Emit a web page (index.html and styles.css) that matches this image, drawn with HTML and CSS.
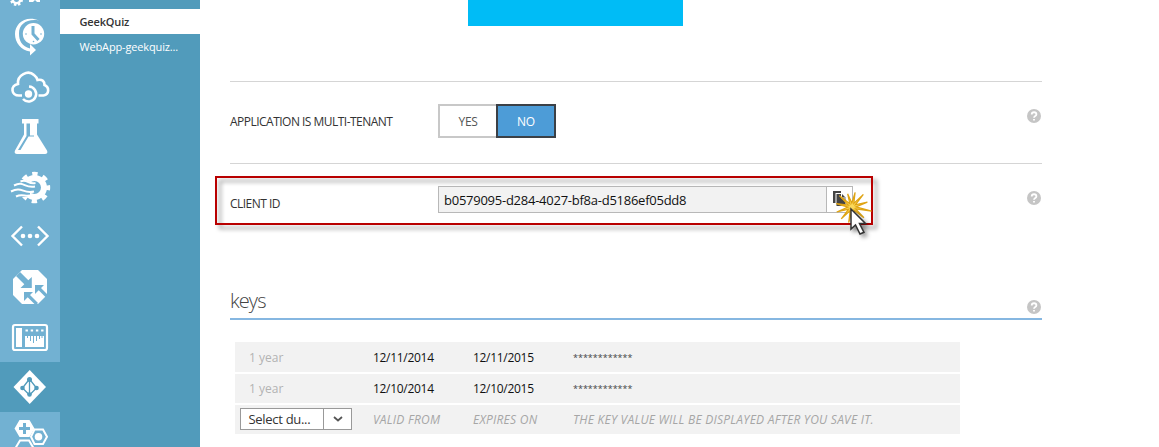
FILE: index.html
```html
<!DOCTYPE html>
<html lang="en">
<head>
<meta charset="utf-8">
<title>GeekQuiz</title>
<link rel="stylesheet" href="styles.css">
</head>
<body>
<div class="app">
  <nav class="rail">
    <div class="rail-item"><svg viewBox="0 0 60 50"><circle cx="16.5" cy="37.500" r="3.800" fill="none" stroke="#fff" stroke-width="2.500"/><circle cx="16.5" cy="37.500" r="5.200" fill="none" stroke="#fff" stroke-width="2.500" stroke-dasharray="2.300 1.800"/><path d="M29 40v-3h11v3h-3l-2-2-2 2z"/></svg></div>
    <div class="rail-item"><svg viewBox="0 0 60 50"><circle cx="33.500" cy="21.700" r="10.700"/><path class="cut" d="M33 14v8l5.500 6" stroke-width="3"/><g class="cutfill"><circle cx="41" cy="22" r=".8"/><circle cx="26" cy="22" r=".8"/><circle cx="33.500" cy="29.500" r=".8"/></g><path d="M39 8.500C25 3 15 12 15 22c0 9 6 16 15 17.500v4L36 38l-6-6v4.500C22 34 19 29 19 21.500 19 12 27 6.500 39 8.500z"/></svg></div>
    <div class="rail-item"><svg viewBox="0 0 60 50"><path class="line" d="M22 33.500h-3c-8 0-9-10-1-11.500C17 13 28 7.500 34 13c2 1.500 3 3 3.500 5 5-1 7 1.500 7 5 5 2 5 9.500-1 10.500h-5" stroke-width="2.600"/><circle cx="28.500" cy="32" r="3.700"/><path class="line" d="M29 24.500a7.500 7.500 0 1 1-6 12.500" stroke-width="2.600"/></svg></div>
    <div class="rail-item"><svg viewBox="0 0 60 50"><path d="M22 7h16.500v4.500H37v11l10 16c1 2 0 3.500-2 3.500H17c-2 0-3-1.500-2-3.500l9-16v-11h-2z"/><path class="cutfill" d="M26.500 11.500h3.500V23.500h4v1h-5.500L20.500 38H18l8.500-14z"/></svg></div>
    <div class="rail-item"><svg viewBox="0 0 60 50"><circle class="line" cx="34.500" cy="25.500" r="9.500" stroke-width="6"/><circle class="line" cx="34.500" cy="25.500" r="13.700" stroke-width="4" stroke-dasharray="5.400 5.360" stroke-dashoffset="2.700"/><path class="cutfill" d="M8 18.500h18l4 1.500v13l-4 2H8z"/><g class="line" stroke-width="2"><path d="M20.500 19.500c7-3 7 3 15 1.500M14 23.500c10-5 10 3 21 1M11 29.500c11-6 12 3 23 0M16 34.500c8-4 9 2 17-2"/></g></svg></div>
    <div class="rail-item"><svg viewBox="0 0 60 50"><path class="line" d="M22 14.500 12.500 24l9.500 9.500M38 14.500l9.500 9.500-9.500 9.500" stroke-width="2.400"/><circle cx="23" cy="24" r="2.300"/><circle cx="30" cy="24" r="2.300"/><circle cx="37" cy="24" r="2.300"/></svg></div>
    <div class="rail-item"><svg viewBox="0 0 60 50"><path d="M22 8h16l9 9v16l-9 9H22l-9-9V17z"/><path class="cutfill" d="m16 14 4-4 8.300 8.300L31.800 15v11H20.500l3.800-3.700zM35 23h9l-3 3 7 7-2.300 2.300-7-7L35 32zM24 30h9l-3 3 8 8-2.300 2.300-8-8L24 39z"/></svg></div>
    <div class="rail-item"><svg viewBox="0 0 60 50"><rect class="line" x="13" y="13" width="34" height="25" rx="2" stroke-width="2.200"/><path d="M16 16h6v19h-6zM25 24h19v11H25z"/><g class="cut" stroke-width="1"><path d="M27.500 23v3M30.500 23v6M33.500 23v8M36.500 23v6M39.500 23v4M42 23v3"/></g><path class="line" d="M25.500 18.500h19" stroke-width="2.200" stroke-dasharray="2.400 2.800"/></svg></div>
    <div class="rail-item active"><svg viewBox="0 0 60 50"><path d="m29.700 8 16.300 17-16.300 17-16.200-17z"/><g class="cut" stroke-width="1.300"><path d="m29.500 17-7 9 7 7 7-7zM29.500 17v16"/></g><g class="cutfill"><circle cx="29.500" cy="17.500" r="2.500"/><circle cx="22.500" cy="26" r="2.300"/><circle cx="36.500" cy="26" r="2.300"/><circle cx="29.500" cy="32.500" r="2.300"/></g></svg></div>
    <div class="rail-item"><svg viewBox="0 0 60 50"><path d="M19.500 8h10l5 8.500-5 8.500h-10l-5-8.500z"/><path class="cut" d="M24.500 11v11M19 16.500h11" stroke-width="3"/><path class="line" d="M34.500 17.500h8.500l4 7.200-4 7.300h-8.500L31 24.700zM20 28.500h9l4.500 7.500-4.500 8h-9l-4.500-8z" stroke-width="2"/><circle cx="38.500" cy="24.700" r="3.800"/></svg></div>
  </nav>
  <aside class="subnav">
    <div class="sub-item selected"><span>GeekQuiz</span></div>
    <div class="sub-item"><span>WebApp-geekquiz...</span></div>
  </aside>
  <main class="main">
    <div class="logo-row"><div class="logo-block"></div></div>
    <section class="row">
      <span class="label">APPLICATION IS MULTI-TENANT</span>
      <div class="toggle"><span class="yes">YES</span><span class="no">NO</span></div>
      <svg class="help" viewBox="0 0 14 14"><circle cx="7" cy="7" r="7"/><path d="M4.700 5.500c0-3 4.700-3 4.700 0C9.400 7 7 7 7 8.700M7 9.900v1.600"/></svg>
    </section>
    <section class="row client">
      <span class="label">CLIENT ID</span>
      <div class="field"><span class="value">b0579095-d284-4027-bf8a-d5186ef05dd8</span><span class="copy"><svg viewBox="0 0 16 18"><path d="M1 1h8v2H3.500v10H1z"/><path d="M4.500 4H10l3.500 3.500V16h-9z"/><path d="M9.500 4v4h4" fill="none" stroke="#fff"/></svg></span></div>
      <svg class="help" viewBox="0 0 14 14"><circle cx="7" cy="7" r="7"/><path d="M4.700 5.500c0-3 4.700-3 4.700 0C9.400 7 7 7 7 8.700M7 9.900v1.600"/></svg>
      <div class="callout"></div>
      <svg class="pointer" viewBox="0 0 50 56"><path class="burst" transform="translate(22 21) rotate(12)" d="M0-15 1-3.900 8.500-14.700 2.800-2.800 14-8 3.900-1 20 0 3.900 1 13.900 8 2.800 2.800 8 13.900 1 3.900 0 16-1 3.900-8 13.900-2.800 2.800-13.900 8-3.900 1-16 0-3.900-1-14.700-8.500-2.800-2.800-7-12-1-3.900z"/><path class="arrow" d="M21 23v20l4.500-4 4.500 9 4-1.700-4.500-8.800h6z"/></svg>
    </section>
    <header class="keys-head"><h2>keys</h2><svg class="help" viewBox="0 0 14 14"><circle cx="7" cy="7" r="7"/><path d="M4.700 5.500c0-3 4.700-3 4.700 0C9.400 7 7 7 7 8.700M7 9.900v1.600"/></svg></header>
    <div class="keys">
      <div class="key first"><span class="muted">1 year</span><span class="date">12/11/2014</span><span class="date">12/11/2015</span><span class="stars">************</span></div>
      <div class="key"><span class="muted">1 year</span><span class="date">12/10/2014</span><span class="date">12/10/2015</span><span class="stars">************</span></div>
      <div class="key new"><div class="select"><span>Select du...</span><i><svg viewBox="0 0 10 6"><path d="m1 1 4 3.500L9 1"/></svg></i></div><em>VALID FROM</em><em>EXPIRES ON</em><em>THE KEY VALUE WILL BE DISPLAYED AFTER YOU SAVE IT.</em></div>
    </div>
  </main>
</div>
</body>
</html>
```
FILE: styles.css
```css
* { box-sizing: border-box; }
body { margin: 0; background: #fff; font: 12px/16px "Open Sans", "Noto Sans", sans-serif; color: #333; overflow: hidden; }
.app { display: flex; height: 447px; overflow: hidden; }
.app span, .app em { white-space: nowrap; }
.rail { width: 60px; flex: none; background: #72b1d2; margin-top: -38px; height: 500px; --bg: #72b1d2; }
.rail-item { height: 50px; }
.rail-item.active { background: #519bbb; --bg: #519bbb; }
.rail-item svg { display: block; width: 60px; height: 50px; fill: #fff; }
.rail-item .line { fill: none; stroke: #fff; }
.rail-item .cut { fill: none; stroke: var(--bg); }
.rail-item .cutfill { fill: var(--bg); }
.subnav { width: 140px; flex: none; background: #519bbb; padding-top: 9px; font-size: 11px; color: #fff; }
.sub-item { height: 25px; padding-left: 19.5px; line-height: 26px; letter-spacing: -.15px; }
.sub-item.selected { background: #fff; color: #333; font-weight: 600; }
.main { width: 842px; padding-left: 30px; }
.logo-row { height: 81px; padding-left: 238px; }
.logo-block { width: 215px; height: 26px; background: #00bcf6; }
.row { height: 82px; border-top: 1px solid #d5d5d5; display: grid; grid-template-columns: 208px 1fr 14px; padding-right: 1px; position: relative; }
.row.client { height: 121px; }
.label { padding-top: 32px; letter-spacing: -.52px; }
.toggle { display: flex; margin-top: 22px; height: 34px; width: 118px; letter-spacing: -.3px; }
.toggle span { width: 58px; border: 2px solid #c8c8c8; border-right: 0; text-align: center; line-height: 31px; color: #555; }
.toggle .no { width: 60px; border: 2px solid #3b4046; background: #4d9cd7; color: #fff; }
.help { width: 14px; height: 14px; margin-top: 27px; fill: #c5c5c5; }
.help path { fill: none; stroke: #fff; stroke-width: 1.8; }
.field { margin-top: 22px; width: 415px; height: 27px; border: 1px solid #b8b8b8; display: flex; }
.value { width: 388px; background: #f2f2f2; border-right: 1px solid #b8b8b8; padding-left: 5px; font-size: 13px; line-height: 26px; color: #111; letter-spacing: -.25px; }
.copy { padding: 3px 0 0 5px; }
.copy svg { width: 16px; height: 18px; fill: #444; }
.callout { position: absolute; left: -15px; top: 12px; width: 658px; height: 49px; border: 2px solid #b90000; filter: drop-shadow(4px 4px 2px rgba(0,0,0,.4)); }
.pointer { position: absolute; left: 600px; top: 22px; width: 50px; height: 56px; overflow: visible; }
.burst { fill: #fbd95a; stroke: #dfa414; stroke-width: 1.2; }
.arrow { fill: #fff; stroke: #333; stroke-width: 1.5; filter: drop-shadow(3px 3px 2px rgba(0,0,0,.4)); }
.keys-head { height: 36px; border-bottom: 2px solid #86b7e1; display: flex; justify-content: space-between; padding-right: 1px; }
h2 { margin: 0; font-size: 20px; line-height: 34px; font-weight: 300; color: #444; letter-spacing: -.9px; }
.keys-head .help { margin-top: 16px; }
.keys { margin: 22px 0 0 5px; width: 725px; }
.key { height: 29px; margin-bottom: 2px; background: #f2f2f2; display: grid; grid-template-columns: 138px 100px 100px 1fr; line-height: 29px; color: #111; }
.key.first { height: 30px; line-height: 31px; }
.muted { padding-left: 14px; color: #b3b3b3; }
.date { letter-spacing: -.3px; }
.stars { color: #444; font-size: 9px; }
.key em { color: #a6a6a6; letter-spacing: .25px; }
.select { width: 112px; height: 22px; margin: 3px 0 0 5px; border: 1px solid #999; background: #fff; display: flex; line-height: 21px; }
.select span { width: 83px; padding-left: 7.5px; border-right: 1px solid #999; font-size: 13px; color: #333; letter-spacing: -.3px; }
.select i { flex: 1; display: flex; align-items: center; justify-content: center; }
.select svg { width: 10px; height: 6px; fill: none; stroke: #555; stroke-width: 1.8; }
```
